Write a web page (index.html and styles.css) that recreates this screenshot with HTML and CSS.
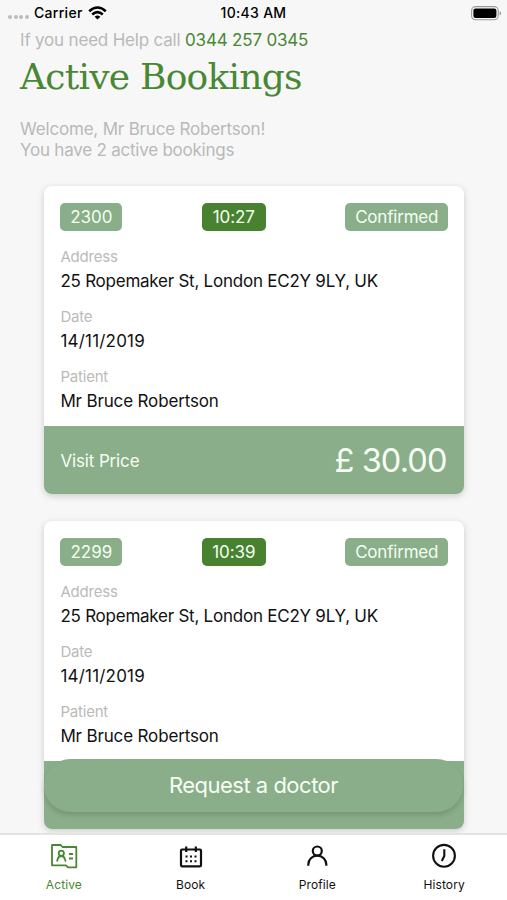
FILE: index.html
```html
<!DOCTYPE html>
<html lang="en">
<head>
<meta charset="utf-8">
<title>Active Bookings</title>
<link rel="stylesheet" href="styles.css">
</head>
<body>
<div class="screen">
  <div class="status">
    <div class="status-left">
      <span class="dots"><i></i><i></i><i></i><i></i></span>
      <span class="carrier">Carrier</span>
      <svg class="wifi" width="19" height="14" viewBox="0 0 19 14" fill="none" stroke="#000" stroke-width="2.5"><path d="M1.2 5.2Q9.5-2.1 17.8 5.2M4.2 8.5Q9.5 3.8 14.8 8.5"/><path d="M9.5 13.5 6.6 10.7Q9.5 8.5 12.4 10.7Z" fill="#000" stroke="none"/></svg>
    </div>
    <span class="time">10:43 AM</span>
    <svg class="battery" width="31" height="15" viewBox="0 0 31 15"><rect x=".6" y=".6" width="26.6" height="13.2" rx="4" fill="none" stroke="#999" stroke-width="1.1"/><rect x="2.4" y="2.4" width="23" height="9.6" rx="2.2"/><path d="M28.6 5v4.6q1.5-.8 1.5-2.3T28.600 5Z" fill="#999"/></svg>
  </div>
  <header class="intro">
    <p class="help">If you need Help call <a class="phone">0344 257 0345</a></p>
    <h1 class="title">Active Bookings</h1>
    <p class="welcome">Welcome, Mr Bruce Robertson!</p>
    <p class="count">You have 2 active bookings</p>
  </header>
  <main class="cards">
    <article class="card">
      <div class="details">
        <div class="pills"><span class="pill pill-id">2300</span><span class="pill pill-time">10:27</span><span class="pill pill-state">Confirmed</span></div>
        <dl class="fields">
          <dt>Address</dt><dd class="address">25 Ropemaker St, London EC2Y 9LY, UK</dd>
          <dt>Date</dt><dd class="date">14/11/2019</dd>
          <dt>Patient</dt><dd class="patient">Mr Bruce Robertson</dd>
        </dl>
      </div>
      <footer class="price"><span class="price-label">Visit Price</span><span class="amount">£ 30.00</span></footer>
    </article>
    <article class="card">
      <div class="details">
        <div class="pills"><span class="pill pill-id">2299</span><span class="pill pill-time">10:39</span><span class="pill pill-state">Confirmed</span></div>
        <dl class="fields">
          <dt>Address</dt><dd class="address">25 Ropemaker St, London EC2Y 9LY, UK</dd>
          <dt>Date</dt><dd class="date">14/11/2019</dd>
          <dt>Patient</dt><dd class="patient">Mr Bruce Robertson</dd>
        </dl>
      </div>
      <footer class="price"></footer>
    </article>
  </main>
  <button class="request"><span>Request a doctor</span></button>
  <nav class="tabs">
    <a class="tab active">
      <svg width="28" height="26" viewBox="0 0 28 26" fill="none" stroke="currentColor" stroke-width="1.8"><path d="M2 2H10.600L12.500 4H26.300V24.300H18L16 22.300H2Z" stroke-linejoin="round"/><circle cx="11.300" cy="10.200" r="2.600"/><path d="M6.700 18.500C8 17.500 7 13 11.300 13S14.600 17.500 15.900 18.500M19 11H23M19 15.500H23"/></svg>
      <span>Active</span>
    </a>
    <a class="tab">
      <svg width="28" height="26" viewBox="0 0 28 26" fill="none" stroke="currentColor" stroke-width="2.200"><rect x="4" y="6.500" width="20" height="16.800" rx="1"/><path d="M9.200 3.500V9M18.800 3.500V9"/><path d="M8.500 13.600H20M8.500 18.300H20" stroke-width="2" stroke-dasharray="2 2.500"/></svg>
      <span>Book</span>
    </a>
    <a class="tab">
      <svg width="28" height="26" viewBox="0 0 28 26" fill="none" stroke="currentColor" stroke-width="2.200"><circle cx="14.300" cy="8" r="4.500"/><path d="M5.300 22.700V21.500C5.300 16.500 9.200 12.700 14.300 12.700S23.300 16.500 23.300 21.500V22.700"/></svg>
      <span>Profile</span>
    </a>
    <a class="tab">
      <svg width="28" height="26" viewBox="0 0 28 26" fill="none" stroke="currentColor" stroke-width="2.100"><circle cx="14" cy="12.800" r="10.900"/><path d="M14.300 6.300V13L11.800 18"/></svg>
      <span>History</span>
    </a>
  </nav>
</div>
</body>
</html>
```
FILE: styles.css
```css
* { box-sizing: border-box; }
body { margin: 0; background: #f7f7f7; color: #111; font-family: Inter, "Liberation Sans", sans-serif; }
p, h1, dl, dd { margin: 0; }
.screen { position: relative; height: 900px; overflow: hidden; }
.status { display: grid; grid-template-columns: 1fr auto 1fr; align-items: center; height: 26px; padding: 0 5px 0 8px; color: #000; font-size: 14px; font-weight: 500; line-height: 26px; letter-spacing: .3px; }
.status-left { display: flex; align-items: center; }
.dots { display: flex; gap: 1.600px; width: 26px; padding-top: 8px; }
.dots i { width: 4px; height: 4px; border-radius: 50%; background: #bbb; }
.carrier { width: 54px; }
.time { margin-right: 3px; }
.battery { justify-self: end; }
.intro { height: 160px; padding: 4px 20px 0; color: #b9b9b9; font-size: 17px; line-height: 21px; }
.help { height: 21px; letter-spacing: -.190px; }
.phone, .title { color: #488733; }
.title { height: 68px; padding-top: 3px; font-family: "Roboto Slab", "DejaVu Serif", serif; font-size: 36px; font-weight: 400; line-height: 45px; letter-spacing: -.750px; white-space: nowrap; }
.welcome { letter-spacing: -.180px; }
.count { letter-spacing: -.230px; }
.cards { display: flex; flex-direction: column; gap: 26.700px; padding: 0 43.500px 0 44px; }
.card { height: 308px; border-radius: 8px; overflow: hidden; background: #fff; box-shadow: 0 2px 7px rgba(0, 0, 0, .18); }
.details { height: 240px; padding: 17px 15.300px 0 16.400px; }
.pills { display: flex; justify-content: space-between; height: 40px; }
.pill { height: 28px; border-radius: 5px; background: #8aad8a; color: #f2fff0; font-size: 17px; line-height: 28px; text-align: center; }
.pill-id { width: 62px; }
.pill-time { width: 64px; margin-left: 39px; margin-right: 39px; background: #488231; letter-spacing: -.100px; }
.pill-state { width: 103px; letter-spacing: -.200px; }
.fields { font-size: 17px; line-height: 26px; }
.fields dt { height: 24px; color: #bababa; font-size: 15px; line-height: 27px; letter-spacing: -.200px; }
.fields dd { height: 36px; line-height: 28px; white-space: nowrap; }
.address { letter-spacing: -.240px; }
.date { letter-spacing: .200px; }
.patient { letter-spacing: -.150px; }
.price { display: flex; align-items: center; justify-content: space-between; height: 68px; padding: 0 17px 0 16.500px; background: #8aad8a; color: #f5fff3; font-size: 17px; }
.price-label { padding-top: 1px; letter-spacing: -.150px; }
.amount { font-size: 32.500px; letter-spacing: -.900px; }
.request { position: absolute; left: 44px; top: 759px; width: 419px; height: 53px; border: 0; border-radius: 26.500px; background: #8aad8a; color: #f5fff3; box-shadow: 0 3px 5px rgba(0, 0, 0, .14); font: 22px/53px Inter, "Liberation Sans", sans-serif; letter-spacing: -.500px; padding: 0; }
.tabs { position: absolute; left: 0; right: 0; bottom: 0; display: grid; grid-template-columns: repeat(4, 1fr); height: 67px; border-top: 2px solid #e4e4e4; background: #fff; }
.tab { display: flex; flex-direction: column; align-items: center; padding: 8px 0 0 1px; font-size: 12px; line-height: 16px; letter-spacing: .100px; }
.tab svg { margin-bottom: 8px; }
.tab.active { color: #488733; }
```
